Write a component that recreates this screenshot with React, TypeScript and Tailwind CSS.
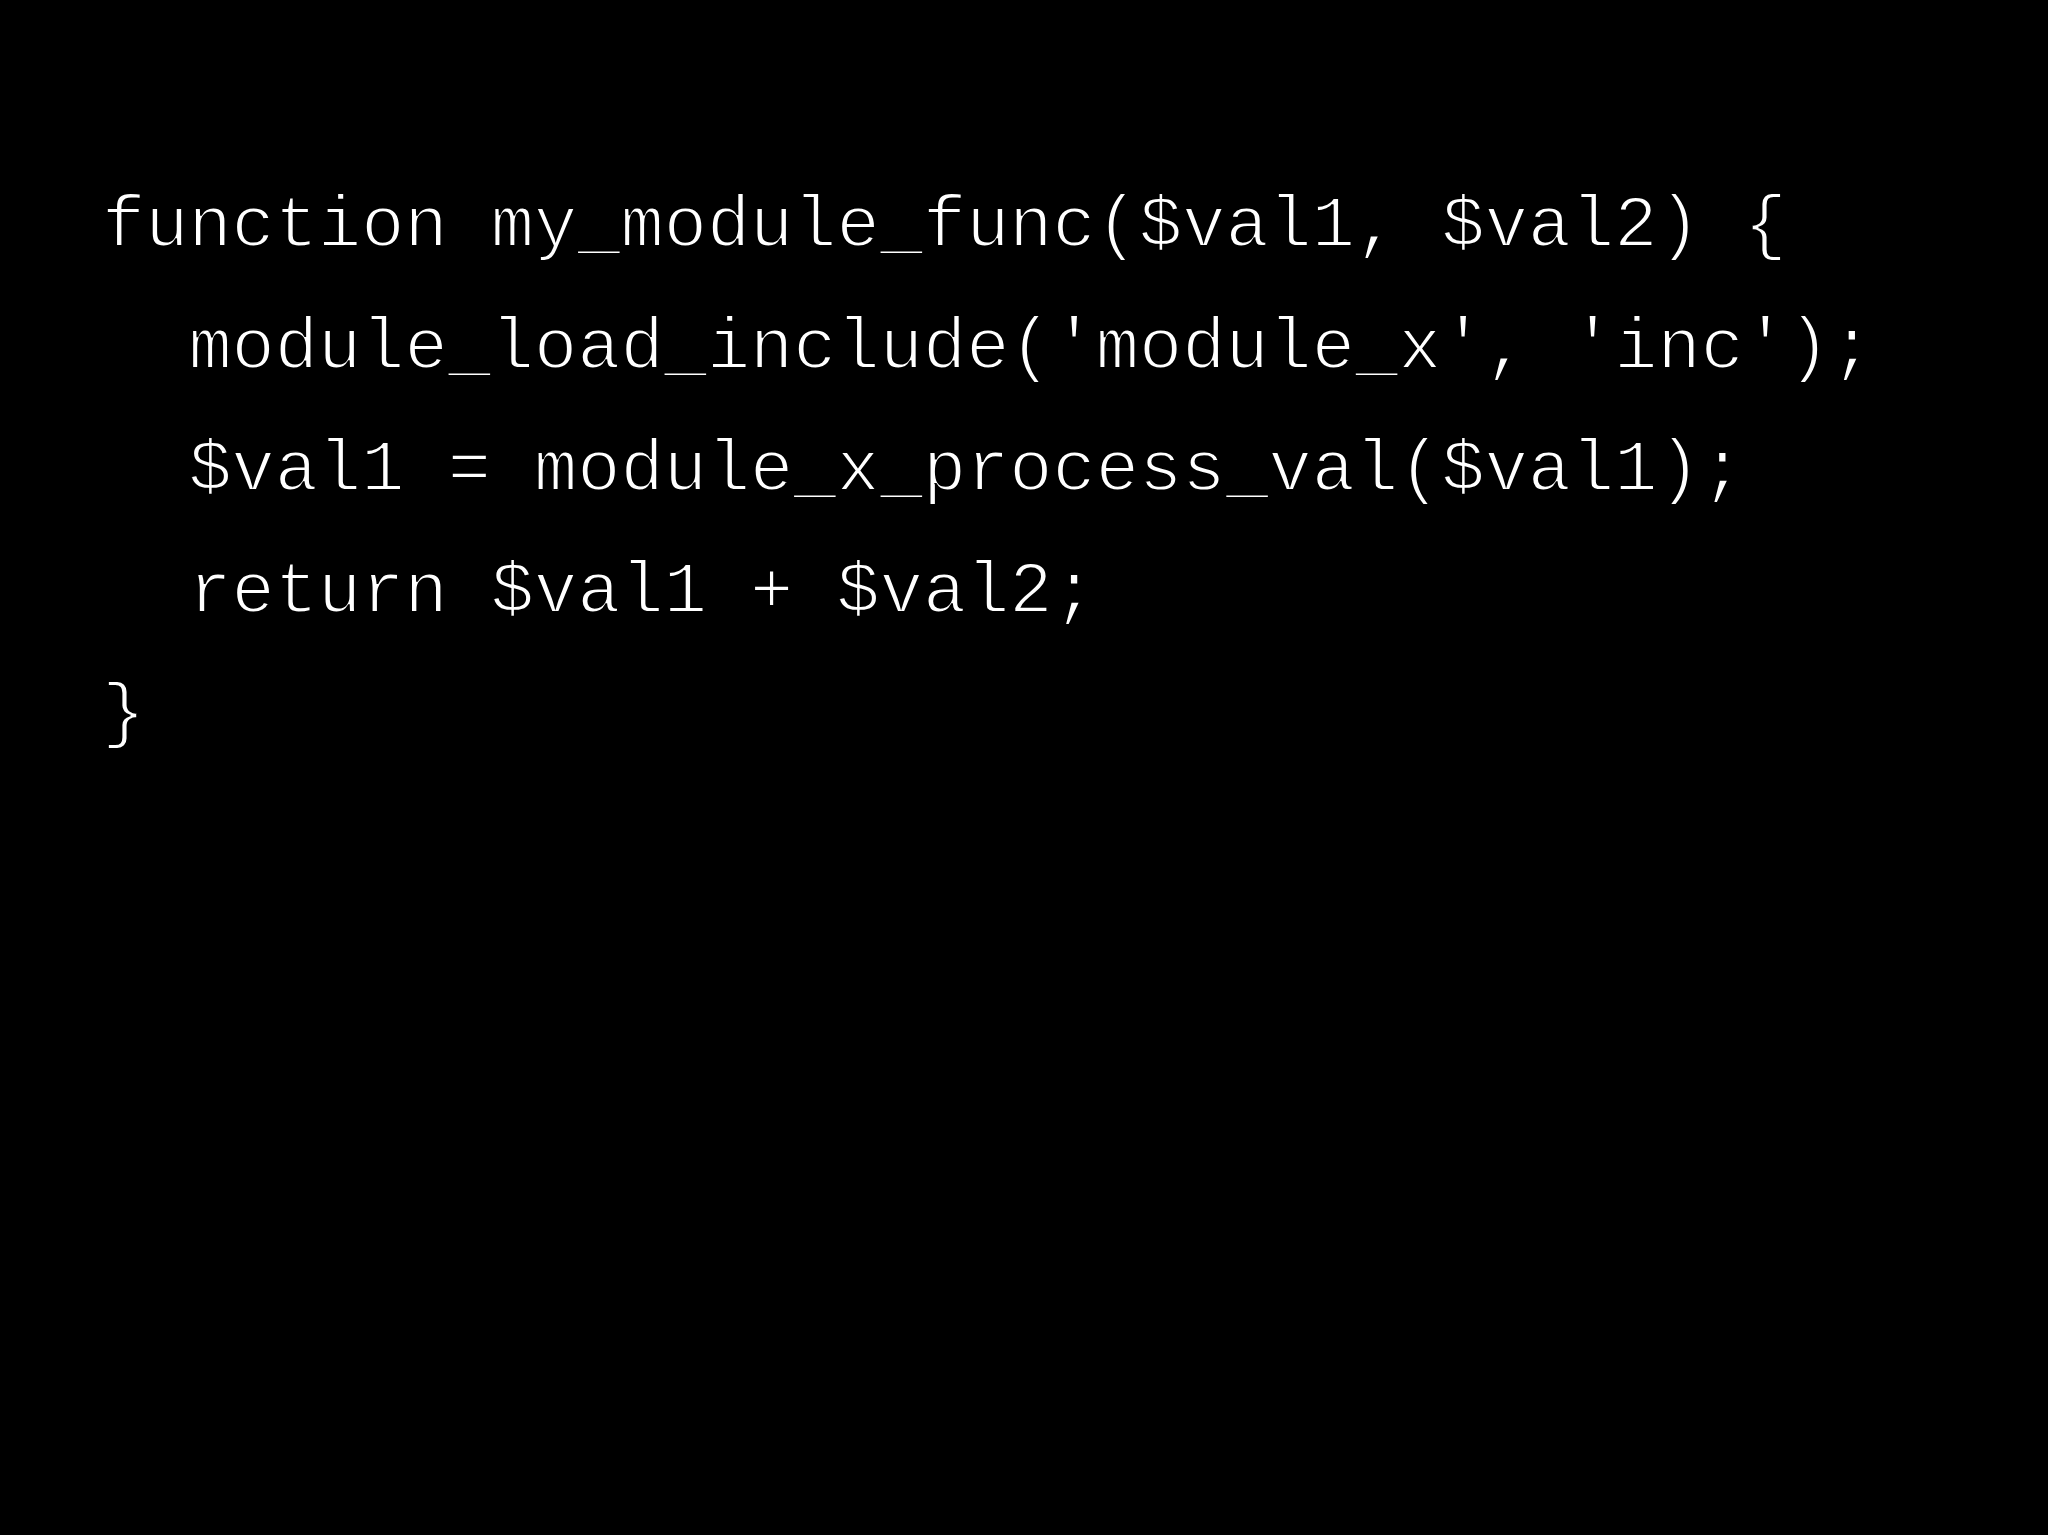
import React from "react";

const lines = [
  "function my_module_func($val1, $val2) {",
  "  module_load_include('module_x', 'inc');",
  "  $val1 = module_x_process_val($val1);",
  "  return $val1 + $val2;",
  "}",
];

export default function App() {
  return (
    <div className="w-[2048px] h-[1535px] bg-black overflow-hidden">
      {/* Code slide - thin strokes to look closer to Courier */}
      <div className="pt-[166px] pl-[102px] text-white text-[72px] leading-[122px] font-['Liberation_Mono','Courier_New',monospace] [-webkit-text-stroke:2px_#000]">
        {lines.map((line, i) => (
          <div key={i} className="whitespace-pre">
            {line}
          </div>
        ))}
      </div>
    </div>
  );
}
